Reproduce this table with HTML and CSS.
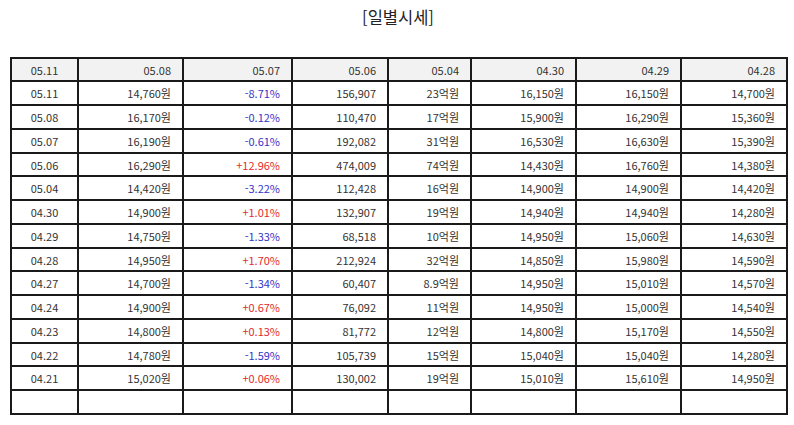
FILE: index.html
```html
<!DOCTYPE html>
<html lang="ko">
<head>
<meta charset="utf-8">
<link rel="stylesheet" href="styles.css">
</head>
<body>
<div class="page">
  <div class="title">[일별시세]</div>
  <table class="prices">
    <colgroup>
      <col class="c1"><col class="c2"><col class="c3"><col class="c4"><col class="c5"><col class="c6"><col class="c7"><col class="c8">
    </colgroup>
    <thead>
      <tr><th class="date">05.11</th><th>05.08</th><th>05.07</th><th>05.06</th><th>05.04</th><th>04.30</th><th>04.29</th><th>04.28</th></tr>
    </thead>
    <tbody>
      <tr><td class="date">05.11</td><td>14,760원</td><td class="down">-8.71%</td><td>156,907</td><td>23억원</td><td>16,150원</td><td>16,150원</td><td>14,700원</td></tr>
      <tr><td class="date">05.08</td><td>16,170원</td><td class="down">-0.12%</td><td>110,470</td><td>17억원</td><td>15,900원</td><td>16,290원</td><td>15,360원</td></tr>
      <tr><td class="date">05.07</td><td>16,190원</td><td class="down">-0.61%</td><td>192,082</td><td>31억원</td><td>16,530원</td><td>16,630원</td><td>15,390원</td></tr>
      <tr><td class="date">05.06</td><td>16,290원</td><td class="up">+12.96%</td><td>474,009</td><td>74억원</td><td>14,430원</td><td>16,760원</td><td>14,380원</td></tr>
      <tr><td class="date">05.04</td><td>14,420원</td><td class="down">-3.22%</td><td>112,428</td><td>16억원</td><td>14,900원</td><td>14,900원</td><td>14,420원</td></tr>
      <tr><td class="date">04.30</td><td>14,900원</td><td class="up">+1.01%</td><td>132,907</td><td>19억원</td><td>14,940원</td><td>14,940원</td><td>14,280원</td></tr>
      <tr><td class="date">04.29</td><td>14,750원</td><td class="down">-1.33%</td><td>68,518</td><td>10억원</td><td>14,950원</td><td>15,060원</td><td>14,630원</td></tr>
      <tr><td class="date">04.28</td><td>14,950원</td><td class="up">+1.70%</td><td>212,924</td><td>32억원</td><td>14,850원</td><td>15,980원</td><td>14,590원</td></tr>
      <tr><td class="date">04.27</td><td>14,700원</td><td class="down">-1.34%</td><td>60,407</td><td>8.9억원</td><td>14,950원</td><td>15,010원</td><td>14,570원</td></tr>
      <tr><td class="date">04.24</td><td>14,900원</td><td class="up">+0.67%</td><td>76,092</td><td>11억원</td><td>14,950원</td><td>15,000원</td><td>14,540원</td></tr>
      <tr><td class="date">04.23</td><td>14,800원</td><td class="up">+0.13%</td><td>81,772</td><td>12억원</td><td>14,800원</td><td>15,170원</td><td>14,550원</td></tr>
      <tr><td class="date">04.22</td><td>14,780원</td><td class="down">-1.59%</td><td>105,739</td><td>15억원</td><td>15,040원</td><td>15,040원</td><td>14,280원</td></tr>
      <tr><td class="date">04.21</td><td>15,020원</td><td class="up">+0.06%</td><td>130,002</td><td>19억원</td><td>15,010원</td><td>15,610원</td><td>14,950원</td></tr>
      <tr><td class="date"></td><td></td><td></td><td></td><td></td><td></td><td></td><td></td></tr>
    </tbody>
  </table>
</div>
</body>
</html>
```
FILE: styles.css
```css
html, body {
  margin: 0;
  padding: 0;
  background: #ffffff;
}
.page {
  padding: 0 8px 0 10px;
  font-family: "Noto Sans CJK KR", "Noto Sans", sans-serif;
  color: #333333;
}
.title {
  text-align: center;
  font-size: 16.5px;
  line-height: 34px;
  height: 34px;
  margin-bottom: 23px;
  color: #222222;
}
.prices {
  width: 776px;
  table-layout: fixed;
  border-collapse: collapse;
  border: 2px solid #1a1a1a;
  font-size: 11px;
}
.c1 { width: 67px; }
.c2 { width: 105px; }
.c3 { width: 109px; }
.c4 { width: 96px; }
.c5 { width: 83px; }
.c6 { width: 105px; }
.c7 { width: 105px; }
.c8 { width: 106px; }
.prices thead tr {
  height: 23px;
}
.prices tbody tr {
  height: 24px;
}
.prices tbody tr:nth-child(4n) {
  height: 23px;
}
.prices th,
.prices td {
  border: 2px solid #1a1a1a;
  padding: 0 11px 0 4px;
  text-align: right;
  font-weight: normal;
  line-height: 14px;
  white-space: nowrap;
}
.prices th {
  background: #f2f2f2;
}
.prices .date {
  text-align: center;
  padding: 0 4px;
}
.prices .down {
  color: #3434c8;
}
.prices .up {
  color: #e22b2b;
}
```
